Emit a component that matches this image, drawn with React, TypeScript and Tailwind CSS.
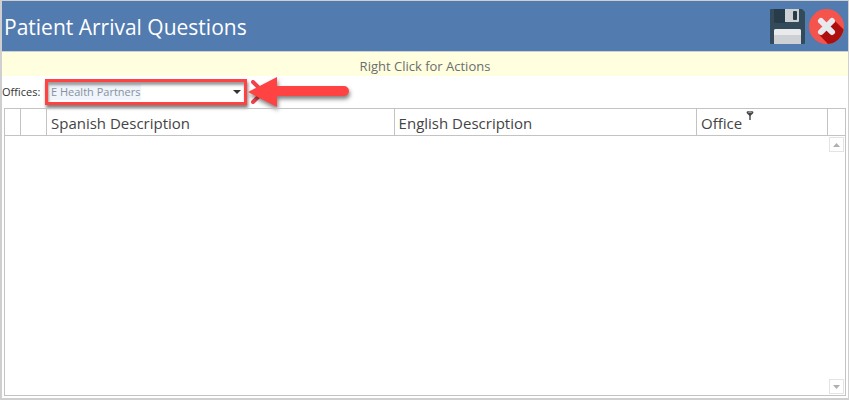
import type { ReactNode } from "react";

const offices = ["E Health Partners"];

function SaveIcon() {
  return (
    <svg viewBox="0 0 35 35" className="size-[35px]" aria-hidden="true">
      <path d="M1 0h31l3 3v31a1 1 0 0 1-1 1H1a1 1 0 0 1-1-1V1a1 1 0 0 1 1-1z" fill="#324a5a" />
      <path d="M4 0h12v14H6a2 2 0 0 1-2-2z" fill="#273b49" />
      <path d="M15 0h14v12a1 1 0 0 1-1 1H15z" fill="#cdd1d4" />
      <rect x="23" y="2" width="4" height="9" rx="1" fill="#273b49" />
      <path d="M4 35V22a2 2 0 0 1 2-2h23a2 2 0 0 1 2 2v13z" fill="#cdd1d4" />
      <path d="M4 26v-4a2 2 0 0 1 2-2h23a2 2 0 0 1 2 2v4z" fill="#e8eaec" />
    </svg>
  );
}

function CloseIcon() {
  return (
    <svg viewBox="0 0 35 35" className="size-[35px]" aria-hidden="true">
      <circle cx="17.5" cy="17.5" r="17.5" fill="#f5544d" />
      <path d="M25 11l9.600 9.600A17.500 17.500 0 0 1 19 35l-8.600-9z" fill="#ad0e0e" />
      <path d="M12 12l11 11M23 12l-11 11" stroke="#e6e9ee" strokeWidth="6" strokeLinecap="round" />
    </svg>
  );
}

function Arrow() {
  return (
    <svg
      viewBox="0 0 106 30"
      className="pointer-events-none absolute -top-[2px] left-full h-[30px] w-[106px] overflow-visible drop-shadow-[1px_3px_2px_rgba(0,0,0,0.5)]"
      aria-hidden="true"
    >
      <path d="M1 15L30 0v9h67a5 5 0 0 1 0 10H30v11z" fill="#ff4343" />
    </svg>
  );
}

function FilterIcon() {
  return (
    <svg viewBox="0 0 8 10" className="h-[10px] w-2 self-start" aria-hidden="true">
      <path d="M.5 2C.5 .5 7.500 .5 7.500 2 7.500 4 5 4.500 4.700 6V10H3.300V6C3 4.500 .5 4 .5 2z" fill="#444" />
      <ellipse cx="4" cy="2" rx="2.200" ry=".6" fill="#ddd" />
    </svg>
  );
}

function ScrollButton({ label, d }: { label: string; d: string }) {
  return (
    <button
      type="button"
      aria-label={label}
      className="grid size-[15px] place-items-center border border-[#e3e3e3] bg-white"
    >
      <svg viewBox="0 0 7 4" className="h-1 w-[7px]" aria-hidden="true">
        <path d={d} fill="#b0b0b0" />
      </svg>
    </button>
  );
}

function HeadCell({ children }: { children?: ReactNode }) {
  return (
    <th className="h-[27px] border-r border-b border-[#c3c3c3] px-1 py-0 text-left font-normal last:border-r-0">
      <div className="flex h-[26px] items-center gap-1 pt-px leading-5">{children}</div>
    </th>
  );
}

export default function App() {
  return (
    <div className="flex min-h-screen flex-col border-t border-r border-b-2 border-l-2 border-[#cfcfcf] bg-white font-['Open_Sans','Noto_Sans',sans-serif] text-[#444]">
      <header className="flex h-[51px] items-center justify-between border-b border-[#c9d3d5] bg-[#527bb0] pr-1 pl-0.5">
        <h1 className="pt-1 text-[21px] text-white">Patient Arrival Questions</h1>
        <div className="flex gap-1">
          <button type="button" aria-label="Save">
            <SaveIcon />
          </button>
          <button type="button" aria-label="Close">
            <CloseIcon />
          </button>
        </div>
      </header>

      <p className="h-6 bg-[#ffffe0] pt-1 text-center text-[13px] leading-5 text-[#6d6d6d]">
        Right Click for Actions
      </p>

      <div className="flex h-8 items-center">
        <label htmlFor="office" className="w-[43px] text-[11px] text-[#333]">
          Offices:
        </label>
        <div className="relative">
          <select
            id="office"
            className="block h-[26px] w-[202px] appearance-none border-3 border-[#ff4343] bg-[linear-gradient(#eff5fb,#eff5fb)] bg-size-[90px_16px] bg-position-[3px_2px] bg-no-repeat pl-[3px] text-[11px] text-[#8791a0] shadow-[1px_3px_3px_rgba(0,0,0,0.5),inset_1px_3px_3px_rgba(0,0,0,0.4)]"
          >
            {offices.map((o) => (
              <option key={o}>{o}</option>
            ))}
          </select>
          <svg
            viewBox="0 0 8 4"
            className="pointer-events-none absolute top-[11px] right-[6px] h-1 w-2"
            aria-hidden="true"
          >
            <path d="M0 0h8L4 4z" fill="#333" />
          </svg>
          <Arrow />
        </div>
        <button type="button" aria-label="Clear office" className="ml-1">
          <svg viewBox="0 0 24 24" className="size-6" aria-hidden="true">
            <path d="M2 2l20 20M22 2L2 22" stroke="#ee4350" strokeWidth="4" strokeLinecap="round" />
          </svg>
        </button>
      </div>

      <div className="relative mx-0.5 mb-0.5 flex-1 border border-[#c3c3c3]">
        <table className="w-full table-fixed border-separate border-spacing-0 text-[15px]">
          <colgroup>
            <col className="w-4" />
            <col className="w-[26px]" />
            <col />
            <col className="w-[36%]" />
            <col className="w-[131px]" />
            <col className="w-[17px]" />
          </colgroup>
          <thead>
            <tr>
              <HeadCell />
              <HeadCell />
              <HeadCell>Spanish Description</HeadCell>
              <HeadCell>English Description</HeadCell>
              <HeadCell>
                Office
                <FilterIcon />
              </HeadCell>
              <HeadCell />
            </tr>
          </thead>
          <tbody />
        </table>
        <div className="absolute top-7 right-px bottom-px flex flex-col justify-between">
          <ScrollButton label="Scroll up" d="M0 4h7L3.500 0z" />
          <ScrollButton label="Scroll down" d="M0 0h7L3.500 4z" />
        </div>
      </div>
    </div>
  );
}
